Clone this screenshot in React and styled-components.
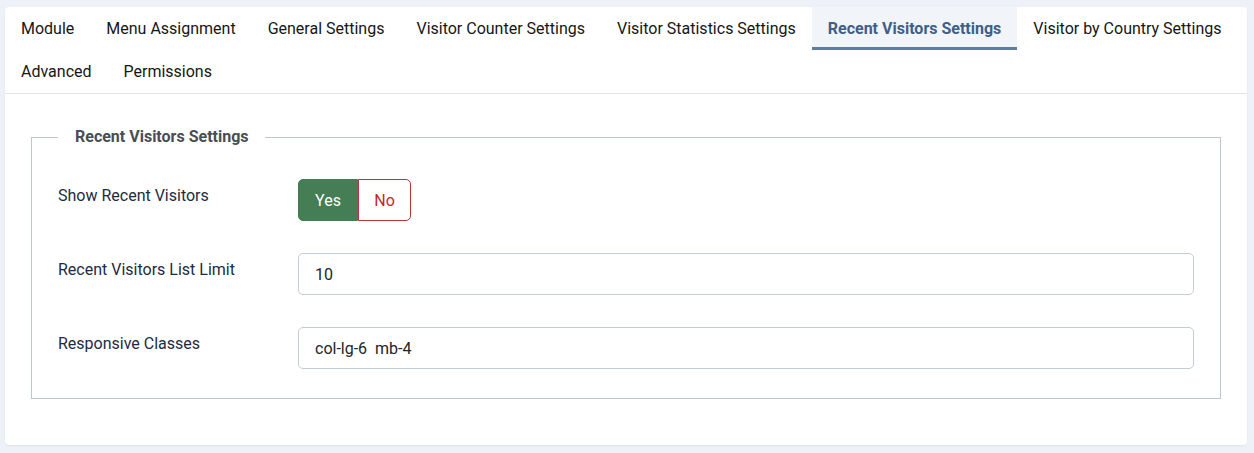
import React from "react";
import styled, { createGlobalStyle } from "styled-components";

const TABS = [
  "Module",
  "Menu Assignment",
  "General Settings",
  "Visitor Counter Settings",
  "Visitor Statistics Settings",
  "Recent Visitors Settings",
  "Visitor by Country Settings",
  "Advanced",
  "Permissions"
];

const GlobalStyle = createGlobalStyle`
  body {
    margin: 0;
    background: #eef2f8;
    font-family: Roboto, "Liberation Sans", Arial, sans-serif;
  }
`;

const Card = styled.div`
  margin: 7px 7px 8px 5px;
  height: 438px;
  background: #fff;
  border-radius: 4px;
  box-shadow: 0 1px 2px rgba(40, 60, 90, 0.08);
  box-sizing: border-box;
`;

const TabBar = styled.div`
  display: flex;
  flex-wrap: wrap;
  border-bottom: 1px solid #e1e5ea;
`;

const Tab = styled.div`
  height: 43px;
  padding: 0 16px;
  display: flex;
  align-items: center;
  box-sizing: border-box;
  font-size: 16px;
  color: ${p => (p.$active ? "#3f5f88" : "#161616")};
  font-weight: ${p => (p.$active ? 700 : 400)};
  background: ${p => (p.$active ? "#f1f4f8" : "transparent")};
  border-bottom: 3px solid ${p => (p.$active ? "#5e7ea1" : "transparent")};
  padding-top: 3px;
`;

const Body = styled.div`
  padding: 30px 26px 0;
`;

const Fieldset = styled.fieldset`
  margin: 0;
  padding: 29px 26px 29px;
  border: 1px solid #bcc7d2;
  min-width: 0;
`;

const Legend = styled.legend`
  padding: 1px 16px 1px 17px;
  font-size: 16px;
  line-height: 24px;
  font-weight: 700;
  color: #4a4e54;
`;

const Row = styled.div`
  display: grid;
  grid-template-columns: 240px 1fr;
  align-items: start;
  & + & {
    margin-top: 32px;
  }
`;

const Label = styled.div`
  padding-top: 5px;
  font-size: 16px;
  line-height: 24px;
  color: #1d2b42;
`;

const Switcher = styled.div`
  display: inline-flex;
  height: 42px;
`;

const Choice = styled.div`
  display: flex;
  align-items: center;
  justify-content: center;
  box-sizing: border-box;
  width: ${p => p.$w}px;
  font-size: 16px;
  color: ${p => (p.$on ? "#fff" : "#c2282a")};
  background: ${p => (p.$on ? "#457d54" : "#fff")};
  border: 1px solid ${p => (p.$on ? "#457d54" : "#b8333a")};
  border-radius: ${p => (p.$on ? "5px 0 0 5px" : "0 5px 5px 0")};
`;

const Input = styled.div`
  height: 42px;
  box-sizing: border-box;
  border: 1px solid #c3ccd6;
  border-radius: 5px;
  padding: 0 16px;
  display: flex;
  align-items: center;
  font-size: 16px;
  color: #212529;
  white-space: pre;
`;

const App = () => (
  <>
    <GlobalStyle />
    <Card>
      <TabBar>
        {TABS.map(t => (
          <Tab key={t} $active={t === "Recent Visitors Settings"}>
            {t}
          </Tab>
        ))}
      </TabBar>
      <Body>
        <Fieldset>
          <Legend>Recent Visitors Settings</Legend>
          <Row>
            <Label>Show Recent Visitors</Label>
            <div>
              <Switcher>
                <Choice $on $w={60}>Yes</Choice>
                <Choice $w={53}>No</Choice>
              </Switcher>
            </div>
          </Row>
          <Row>
            <Label>Recent Visitors List Limit</Label>
            <Input>10</Input>
          </Row>
          <Row>
            <Label>Responsive Classes</Label>
            <Input>col-lg-6  mb-4</Input>
          </Row>
        </Fieldset>
      </Body>
    </Card>
  </>
);

export default App;
